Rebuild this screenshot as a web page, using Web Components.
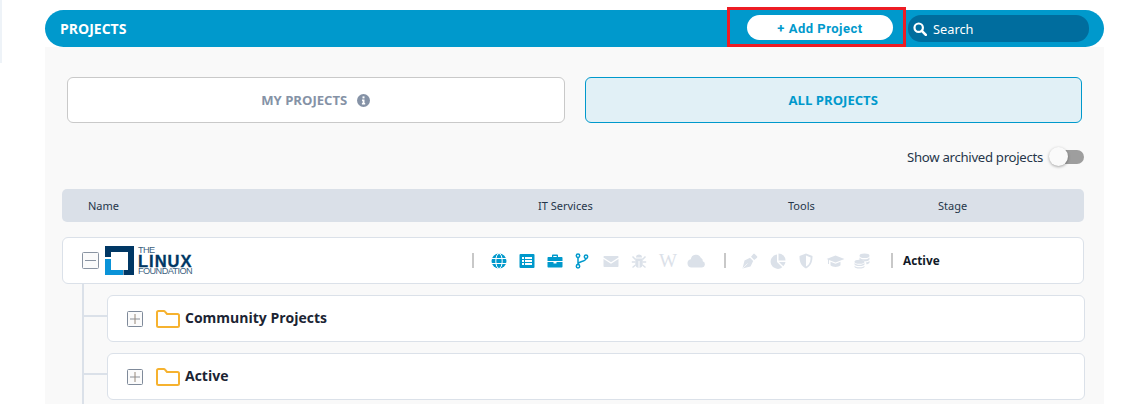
<!DOCTYPE html>
<html lang="en">
<head>
<meta charset="utf-8">
<title>Projects</title>
<style>
html, body { margin: 0; padding: 0; height: 404px; overflow: hidden; background: #fff; }
body { font-family: "Open Sans", "Noto Sans", sans-serif; color: #1b2a3d; }
</style>
</head>
<body>
<projects-page>
  <projects-header slot="header"></projects-header>
  <project-tabs></project-tabs>
  <archive-toggle>Show archived projects</archive-toggle>
  <table-head></table-head>
  <root-row></root-row>
  <project-tree>
    <folder-row>Community Projects</folder-row>
    <folder-row>Active</folder-row>
  </project-tree>
</projects-page>

<script>
function define(name, html) {
  customElements.define(name, class extends HTMLElement {
    constructor() {
      super();
      this.attachShadow({ mode: 'open' });
      const template = document.createElement('template');
      template.innerHTML = html;
      this.shadowRoot.appendChild(template.content.cloneNode(true));
    }
  });
}

define('projects-page', `
<style>
:host { display: flex; height: 404px; box-sizing: border-box; }
.edge { width: 2px; height: 63px; background: #eef3f8; flex: none; }
.main { width: 1059px; margin: 10px 0 0 43px; display: flex; flex-direction: column; }
.panel { flex: 1; background: #f9f9f9; padding: 30px 20px 0 17px; min-height: 0; overflow: hidden; }
</style>
<div class="edge"></div>
<div class="main">
  <slot name="header"></slot>
  <div class="panel"><slot></slot></div>
</div>
`);

define('projects-header', `
<style>
:host { display: flex; align-items: center; height: 37px; background: #0099cc; border-radius: 19px; }
h1 { margin: 0 0 0 15px; font: 700 14px "Open Sans", sans-serif; color: #fff; flex: 1; }
.highlight { box-sizing: border-box; width: 179px; height: 40px; margin: -3px 0 0; border: 3px solid #ed1c24; display: flex; align-items: center; justify-content: center; padding: 3px 10px 0 17px; }
button { width: 146px; height: 25px; border: 0; border-radius: 13px; background: #fff; color: #0099cc; font: 700 13px Roboto, sans-serif; letter-spacing: .5px; padding: 2px 0 0; margin-top: -2px; }
.search { box-sizing: border-box; width: 181px; height: 27px; margin: 0 15px 0 2px; background: #006d9e; border-radius: 13px; display: flex; align-items: center; gap: 6px; padding-left: 5px; color: #fff; font: 400 12.8px "Noto Sans", sans-serif; }
svg { display: block; width: 14px; height: 14px; }
</style>
<h1>PROJECTS</h1>
<div class="highlight"><button>+ Add Project</button></div>
<div class="search">
  <svg viewBox="0 0 14 14"><circle cx="5.700" cy="5.700" r="4.200" fill="none" stroke="#fff" stroke-width="2.200"/><path d="M8.800 8.800l4 4" stroke="#fff" stroke-width="2.600" stroke-linecap="round"/></svg>
  <span>Search</span>
</div>
`);

define('project-tabs', `
<style>
:host { display: flex; gap: 20px; margin: 0 2px 0 5px; }
.tab { box-sizing: border-box; flex: 1; height: 46px; border: 1px solid #c9c9c9; border-radius: 6px; background: #fff; display: flex; align-items: center; justify-content: center; gap: 10px; font: 700 13.100px "Open Sans", sans-serif; color: #8592a6; }
.tab.on { border-color: #0099cc; background: #e1f0f6; color: #0099cc; }
svg { width: 13px; height: 13px; display: block; }
</style>
<div class="tab"><span>MY PROJECTS</span>
  <svg viewBox="0 0 13 13"><circle cx="6.500" cy="6.500" r="6.500" fill="#8592a6"/><rect x="5.500" y="2.400" width="2" height="2" fill="#fff"/><path d="M5 5.500h2.500v3.600h.7v1.400H4.900V9.100h.7V6.900H5z" fill="#fff"/></svg>
</div>
<div class="tab on"><span>ALL PROJECTS</span></div>
`);

define('archive-toggle', `
<style>
:host { display: flex; justify-content: flex-end; align-items: center; height: 20px; margin-top: 24px; font: 400 13.200px "Noto Sans", sans-serif; letter-spacing: -.3px; color: #26364a; }
span { margin-top: -1px; }
.track { position: relative; width: 34px; height: 14px; margin-left: 7px; background: #9e9e9e; border-radius: 7px; }
.knob { position: absolute; left: -1px; top: -3px; width: 19px; height: 19px; border-radius: 50%; background: #fafafa; box-shadow: 0 1px 3px rgba(0,0,0,.35); }
</style>
<span><slot></slot></span>
<div class="track"><div class="knob"></div></div>
`);

define('table-head', `
<style>
:host { display: grid; grid-template-columns: 450px 250px 150px 1fr; align-items: center; height: 33px; margin-top: 22px; padding-left: 26px; background: #dae0e8; border-radius: 5px; font: 400 11px "Noto Sans", sans-serif; color: #26364a; }
</style>
<span>Name</span><span>IT Services</span><span>Tools</span><span>Stage</span>
`);

define('expand-box', `
<style>
:host { display: block; width: 16px; height: 16px; }
svg { display: block; width: 100%; height: 100%; }
</style>
<svg viewBox="0 0 16 16"><rect x=".5" y=".5" width="15" height="15" rx="1" fill="#fbfbfb" stroke="#7f8a9a"/><path d="M3 8h10" stroke="#8b8f96"/><path d="M8 3v10" stroke="#96887a"/></svg>
`);

define('collapse-box', `
<style>
:host { display: block; width: 17px; height: 17px; }
svg { display: block; width: 100%; height: 100%; }
</style>
<svg viewBox="0 0 17 17"><rect x=".5" y=".5" width="16" height="16" rx="1" fill="#fbfbfb" stroke="#8a94a2"/><path d="M3 8.500h11" stroke="#8a94a2"/></svg>
`);

define('lf-logo', `
<style>
:host { display: flex; align-items: center; gap: 4px; color: #003764; }
svg { display: block; width: 29px; height: 29px; flex: none; }
.words { display: flex; flex-direction: column; font-family: "Liberation Sans", sans-serif; }
.thin { font-size: 9.200px; line-height: 9px; height: 9px; font-weight: 400; letter-spacing: -.6px; color: #3d5f80; }
.big { font-size: 16.500px; line-height: 12px; height: 12px; font-weight: 700; letter-spacing: 1px; -webkit-text-stroke: .3px #003764; }
</style>
<svg viewBox="0 0 29 29">
  <path d="M0 0h29v29H18.500v-5H23V6H6v5H0z" fill="#003764"/>
  <path d="M0 13h6v11h12v5H0z" fill="#0a93d8"/>
</svg>
<div class="words"><span class="thin">THE</span><span class="big">LINUX</span><span class="thin">FOUNDATION</span></div>
`);

const blue = '#0099cc';
const grey = '#dbe1e9';
const icons = {
  globe: `<svg viewBox="0 0 16 16" style="color:${blue}"><circle cx="8" cy="8" r="7.500" fill="currentColor"/><g fill="none" stroke="#fff" stroke-width="1"><ellipse cx="8" cy="8" rx="3.200" ry="7.500"/><path d="M.5 5.500h15M.5 10.500h15"/></g></svg>`,
  list: `<svg viewBox="0 0 16 16" style="color:${blue}"><rect x="0.500" y="1" width="15" height="14" rx="1" fill="currentColor"/><g fill="#fff"><rect x="3" y="4" width="2" height="2"/><rect x="3" y="7" width="2" height="2"/><rect x="3" y="10" width="2" height="2"/><rect x="6" y="4" width="7" height="2"/><rect x="6" y="7" width="7" height="2"/><rect x="6" y="10" width="7" height="2"/></g></svg>`,
  case: `<svg viewBox="0 0 16 16" style="color:${blue}"><path d="M5 4V2.500C5 1.900 5.500 1.500 6 1.500h4c.5 0 1 .4 1 1V4h3.500c.6 0 1 .4 1 1v3H.5V5c0-.6.4-1 1-1zm1.300 0h3.400V3H6.300z" fill="currentColor" fill-rule="evenodd"/><path d="M.5 9h6v1.500h3V9h6v4.500c0 .6-.4 1-1 1h-13c-.6 0-1-.4-1-1z" fill="currentColor"/></svg>`,
  branch: `<svg viewBox="0 0 16 16" style="color:${blue}"><g fill="none" stroke="currentColor" stroke-width="1.500"><circle cx="3" cy="2.800" r="1.700"/><circle cx="3" cy="13.200" r="1.700"/><circle cx="11" cy="3.800" r="1.700"/><path d="M3 4.500v7M11 5.500c0 3.500-8 2.500-8 5.500"/></g></svg>`,
  mail: `<svg viewBox="0 0 16 16" style="color:${grey}"><path d="M.5 4c0-.6.4-1 1-1h13c.6 0 1 .4 1 1v.6L8 9.300.5 4.600z" fill="currentColor"/><path d="M.5 6l7.500 4.700L15.500 6v7c0 .6-.4 1-1 1h-13c-.6 0-1-.4-1-1z" fill="currentColor"/></svg>`,
  bug: `<svg viewBox="0 0 16 16" style="color:${grey}"><path d="M5 4.500a3 3 0 016 0z" fill="currentColor"/><path d="M4.300 5.500h7.400V12a3.700 3.700 0 01-3.200 3V8h-1v7a3.700 3.700 0 01-3.200-3z" fill="currentColor"/><path d="M1.500 3.500l3 3M14.500 3.500l-3 3M.8 9h3.500M15.200 9h-3.500M1.500 14.500l3-2.500M14.500 14.500l-3-2.500" stroke="currentColor" stroke-width="1.500" fill="none"/></svg>`,
  pen: `<svg viewBox="0 0 16 16" style="color:${grey}"><path d="M.5 15.500l2-8L8 4.800 11.200 8 8.500 13.500z" fill="currentColor"/><path d="M9 3.800l2.300-2.800c.4-.4 1-.4 1.400 0l2.300 2.300c.4.400.4 1 0 1.400L12.200 7z" fill="currentColor"/><path d="M1 15l4.500-4.500" stroke="#f9f9f9" stroke-width=".8"/></svg>`,
  pie: `<svg viewBox="0 0 16 16" style="color:${grey}"><path d="M7 1.500v7.500l5.300 5.300A7.200 7.200 0 117 1.500z" fill="currentColor"/><path d="M8.500.5a7 7 0 017 7h-7z" fill="currentColor"/><path d="M9 9h6.500a7 7 0 01-2.200 4.300z" fill="currentColor"/></svg>`,
  shield: `<svg viewBox="0 0 16 16" style="color:${grey}"><path d="M8 .5l6.500 2.500c0 6-1.500 10-6.500 12.500C3 13 1.500 9 1.500 3zM8 2.500v11c3.500-2 4.500-5 4.600-9.100z" fill="currentColor" fill-rule="evenodd"/></svg>`,
  cap: `<svg viewBox="0 0 18 16" style="color:${grey}"><path d="M9 2.500L18 6 9 9.500 2.500 7v4H1.500V6.500L0 6z" fill="currentColor"/><path d="M4 8.800l5 2 5-2v3.500c-1.200 1.200-3 1.700-5 1.700s-3.800-.5-5-1.700z" fill="currentColor"/></svg>`,
  coins: `<svg viewBox="0 0 16 16" style="color:${grey}"><g fill="currentColor"><ellipse cx="10.500" cy="2.800" rx="5" ry="2.300"/><path d="M5.500 4.500c1 1.300 2.800 1.800 5 1.800s4-.5 5-1.800v1.700c0 1.200-2 2-4.500 2.100-1.200-.9-3-1.300-5.500-1.300z"/><path d="M11.800 9.400c1.600-.2 3-.7 3.700-1.500v1.700c0 .8-1.100 1.500-2.800 1.800-.2-.7-.5-1.400-.9-2z"/><ellipse cx="5.500" cy="8.800" rx="5" ry="2"/><path d="M.5 10c1 1.200 2.800 1.800 5 1.800s4-.6 5-1.800v1.300c0 1-2.200 1.800-5 1.800s-5-.8-5-1.800z"/><path d="M.5 12.800c1 1 2.800 1.500 5 1.500s4-.5 5-1.500v.9c0 1-2.200 1.800-5 1.800s-5-.8-5-1.800z"/></g></svg>`,
  cloud: `<svg viewBox="0 0 19 16" style="color:${grey}"><path d="M4.500 14.500A4.200 4.200 0 013.800 6.200 5.300 5.300 0 0113.800 4.800 3.400 3.400 0 0115.800 8.300 3.200 3.200 0 0115 14.500z" fill="currentColor"/></svg>`
};

define('root-row', `
<style>
:host { box-sizing: border-box; display: flex; align-items: center; height: 47px; margin-top: 15px; background: #fff; border: 1px solid #dbe1e9; border-radius: 6px; padding-left: 19px; }
lf-logo { margin-left: 6px; width: 367px; flex: none; }
.sep { width: 2px; height: 15px; background: #c8c8c8; flex: none; }
.icons { display: flex; align-items: center; gap: 12px; flex: none; box-sizing: border-box; padding-left: 17px; }
.it { width: 250px; }
.tools { width: 165px; padding-left: 16px; }
svg { width: 16px; height: 16px; display: block; flex: none; }
.wide { width: 16px; flex: none; }
.wide svg { width: 19px; }
.w { font: 400 19px/16px "Liberation Serif", serif; color: ${grey}; width: 16px; flex: none; white-space: nowrap; }
.stage { margin: -2px 0 0 10px; font: 700 11.800px "Open Sans", sans-serif; color: #101a28; }
</style>
<collapse-box></collapse-box>
<lf-logo></lf-logo>
<div class="sep"></div>
<div class="icons it">
  ${icons.globe}${icons.list}${icons.case}${icons.branch}${icons.mail}${icons.bug}<span class="w">W</span><span class="wide">${icons.cloud}</span>
</div>
<div class="sep"></div>
<div class="icons tools">
  ${icons.pen}${icons.pie}${icons.shield}<span class="wide">${icons.cap}</span>${icons.coins}
</div>
<div class="sep"></div>
<span class="stage">Active</span>
`);

define('project-tree', `
<style>
:host { display: block; margin-left: 20px; border-left: 2px solid #dbe1e9; padding: 11px 0 40px 0; margin-right: -1px; }
::slotted(folder-row) { margin-top: 11px; }
::slotted(folder-row:first-child) { margin-top: 0; }
</style>
<slot></slot>
`);

define('folder-row', `
<style>
:host { display: flex; align-items: center; }
.link { width: 23px; height: 2px; margin-bottom: 6px; background: #dbe1e9; flex: none; }
.card { box-sizing: border-box; flex: 1; height: 47px; display: flex; align-items: center; background: #fff; border: 1px solid #dbe1e9; border-radius: 6px; padding-left: 19px; }
svg { display: block; width: 24px; height: 18px; margin-left: 13px; }
.name { margin: -2px 0 0 5px; font: 700 14px "Open Sans", sans-serif; color: #1b2433; }
</style>
<div class="link"></div>
<div class="card">
  <expand-box></expand-box>
  <svg viewBox="0 0 24 18"><path d="M1 15.500V2.500C1 1.700 1.700 1 2.500 1h5.300c.5 0 .9.200 1.200.600L11 4h10.500c.8 0 1.500.7 1.500 1.500v10c0 .8-.7 1.500-1.500 1.500h-19C1.700 17 1 16.300 1 15.500z" fill="#fff" stroke="#f6b22f" stroke-width="2" stroke-linejoin="round"/></svg>
  <span class="name"><slot></slot></span>
</div>
`);
</script>
</body>
</html>
